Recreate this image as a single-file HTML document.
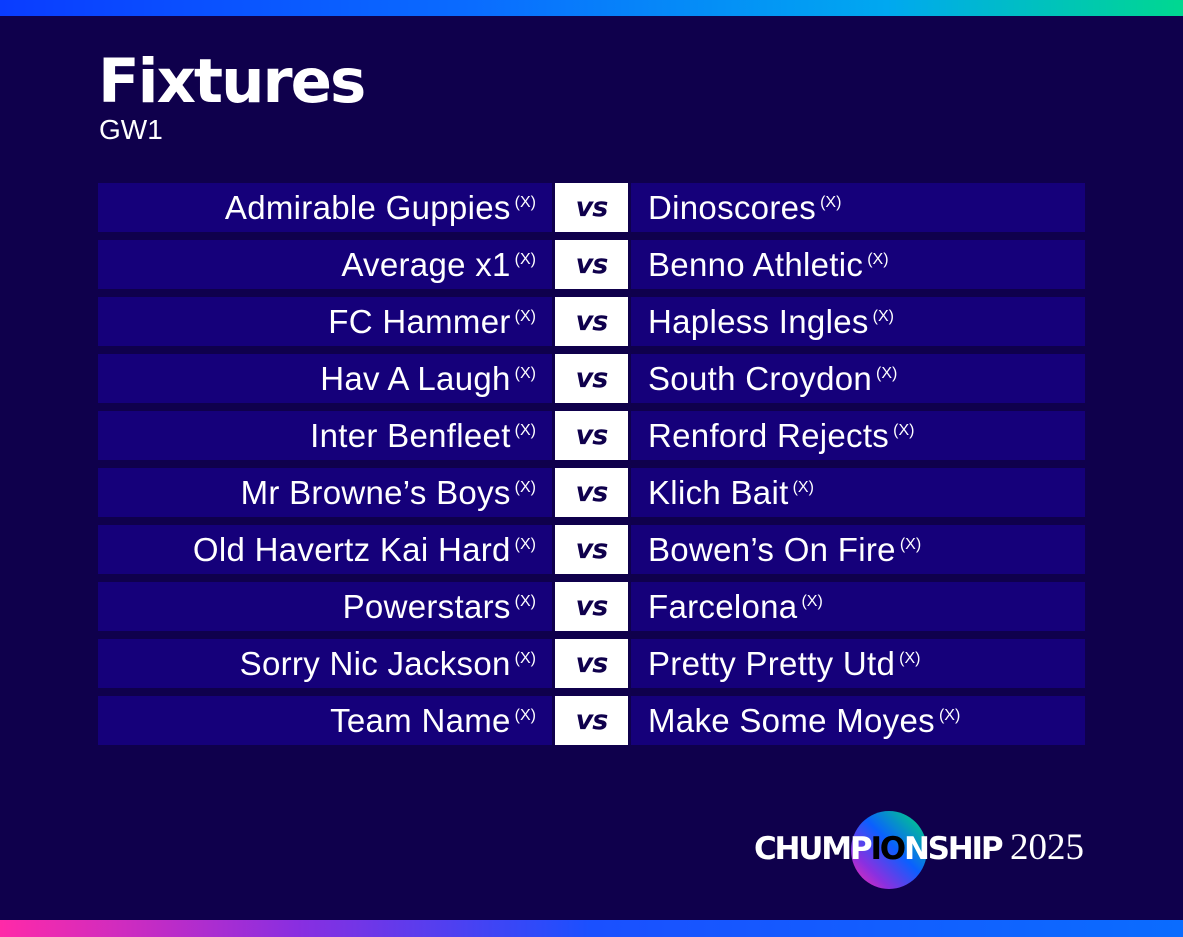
<!DOCTYPE html>
<html><head><style>
*{margin:0;padding:0;box-sizing:border-box}
body{width:1183px;height:937px;background:#0f004c;position:relative;overflow:hidden;font-family:"Liberation Sans","DejaVu Sans",sans-serif;color:#fff}
.top{position:absolute;left:0;top:0;width:1183px;height:16px;background:linear-gradient(90deg,#0a3cff 0%,#0a6cff 40%,#00a8f0 75%,#00d890 100%)}
.bot{position:absolute;left:0;top:920px;width:1183px;height:17px;background:linear-gradient(90deg,#ff2aa8 0%,#8a2ee0 25%,#1a50ff 50%,#0a6cff 100%)}
h1{position:absolute;left:98px;top:46px;font-size:61px;font-weight:900;letter-spacing:-2px;font-family:"DejaVu Sans","Liberation Sans",sans-serif}
.gw{position:absolute;left:99px;top:114px;font-size:28px}
.row{position:absolute;left:98px;height:49px;width:987px}
.l,.v,.r{position:absolute;top:0;height:49px;font-size:33px;line-height:49px;letter-spacing:0.3px}
.l{left:0;width:454px;background:#15007a;text-align:right;padding-right:16px}
.v{left:457px;width:73px;background:#fff;color:#0f004c;text-align:center;font-weight:900;font-family:"DejaVu Sans",sans-serif;font-style:italic;font-size:27px;letter-spacing:-1px}
.r{left:533px;width:454px;background:#15007a;padding-left:17px}
sup{font-size:16px;vertical-align:0;position:relative;top:-12px;margin-left:4px;letter-spacing:0}
.logo{position:absolute;left:754px;top:831px;font-size:31px;font-weight:900;font-family:"DejaVu Sans",sans-serif;letter-spacing:-2.2px;line-height:36px}
.circ{position:absolute;left:851px;top:811px;width:76px;height:78px;border-radius:50%;background:linear-gradient(225deg,#00e070 0%,#0a60ff 45%,#8a30e0 75%,#ff2aa8 100%)}
.yr{position:absolute;left:1010px;top:827px;font-size:37px;font-family:"Liberation Serif",serif;line-height:42px}
</style></head><body>
<div class="top"></div>
<h1>Fixtures</h1>
<div class="gw">GW1</div>

<div class="row" style="top:183px"><div class="l">Admirable Guppies<sup>(X)</sup></div><div class="v">vs</div><div class="r">Dinoscores<sup>(X)</sup></div></div>
<div class="row" style="top:240px"><div class="l">Average x1<sup>(X)</sup></div><div class="v">vs</div><div class="r">Benno Athletic<sup>(X)</sup></div></div>
<div class="row" style="top:297px"><div class="l">FC Hammer<sup>(X)</sup></div><div class="v">vs</div><div class="r">Hapless Ingles<sup>(X)</sup></div></div>
<div class="row" style="top:354px"><div class="l">Hav A Laugh<sup>(X)</sup></div><div class="v">vs</div><div class="r">South Croydon<sup>(X)</sup></div></div>
<div class="row" style="top:411px"><div class="l">Inter Benfleet<sup>(X)</sup></div><div class="v">vs</div><div class="r">Renford Rejects<sup>(X)</sup></div></div>
<div class="row" style="top:468px"><div class="l">Mr Browne’s Boys<sup>(X)</sup></div><div class="v">vs</div><div class="r">Klich Bait<sup>(X)</sup></div></div>
<div class="row" style="top:525px"><div class="l">Old Havertz Kai Hard<sup>(X)</sup></div><div class="v">vs</div><div class="r">Bowen’s On Fire<sup>(X)</sup></div></div>
<div class="row" style="top:582px"><div class="l">Powerstars<sup>(X)</sup></div><div class="v">vs</div><div class="r">Farcelona<sup>(X)</sup></div></div>
<div class="row" style="top:639px"><div class="l">Sorry Nic Jackson<sup>(X)</sup></div><div class="v">vs</div><div class="r">Pretty Pretty Utd<sup>(X)</sup></div></div>
<div class="row" style="top:696px"><div class="l">Team Name<sup>(X)</sup></div><div class="v">vs</div><div class="r">Make Some Moyes<sup>(X)</sup></div></div>

<div class="circ"></div>
<div class="logo">CHUMP<span style="color:#000">IO</span>NSHIP</div>
<div class="yr">2025</div>
<div class="bot"></div>
</body></html>
